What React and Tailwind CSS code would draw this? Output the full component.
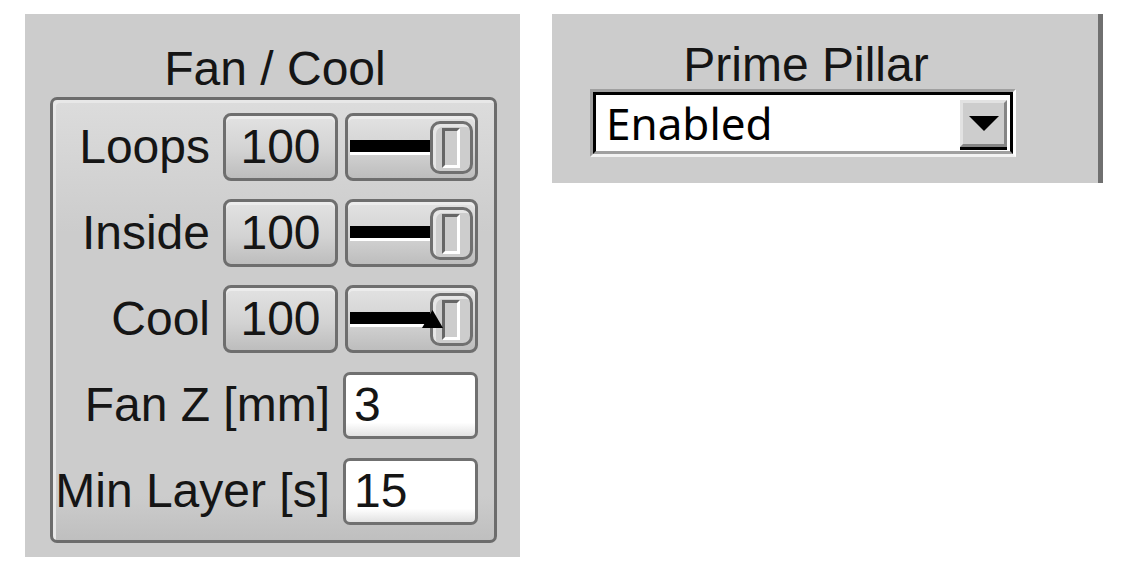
import React from "react";

function ValueButton({ children }) {
  return (
    <div className="w-[115px] h-[68px] border-[3px] border-[#6e6e6e] rounded-[8px] bg-[linear-gradient(to_bottom,#e2e2e2,#d3d3d3_55%,#bdbdbd)] shadow-[inset_0_3px_0_#ececec] flex items-center justify-center">
      {children}
    </div>
  );
}

function Slider({ marker }) {
  return (
    <div className="relative w-[133px] h-[68px] border-[3px] border-[#6e6e6e] rounded-[8px] bg-[linear-gradient(to_bottom,#e2e2e2,#d3d3d3_55%,#bdbdbd)] shadow-[inset_0_3px_0_#ececec] flex items-center pl-[2px]">
      <div className="w-[80px] h-[15px] bg-black border-b-[3px] border-white" />
      <div className="w-[43px] h-[53px] border-[3px] border-[#707070] rounded-[10px] bg-[#cdcdcd] shadow-[inset_3px_3px_0_#e6e6e6] pl-[9px] pt-[4px]">
        <div className="w-[18px] h-[40px] border-[3px] border-t-[#666666] border-l-[#666666] border-r-white border-b-white bg-[#cccccc]" />
      </div>
      {marker && (
        <svg className="absolute left-[74px] top-[22px]" width="21" height="18" viewBox="0 0 21 18">
          <polygon points="10.5,0 21,18 0,18" fill="#000" />
        </svg>
      )}
    </div>
  );
}

function TextInput({ value }) {
  return (
    <div className="w-[135px] h-[67px] border-[3px] border-[#707070] rounded-[7px] bg-[linear-gradient(to_bottom,#ffffff_78%,#e2e2e2)] flex items-center pl-[8px]">
      {value}
    </div>
  );
}

function Row({ label, children }) {
  return (
    <div className="flex items-center h-[68px] gap-[13px]">
      <span className="whitespace-nowrap">{label}</span>
      {children}
    </div>
  );
}

export default function App() {
  return (
    <div className="min-h-screen bg-white pt-[14px] pl-[25px] flex items-start gap-[32px] font-['Liberation_Sans'] text-[48px] leading-[48px] text-[#151515]">
      {/* Fan / Cool panel */}
      <div className="w-[495px] h-[543px] bg-[#cccccc] flex flex-col pt-[31px]">
        <div className="h-[48px] text-center pl-[5px]">Fan / Cool</div>
        <div className="mt-[4px] ml-[25px] w-[447px] h-[446px] border-[3px] border-[#6c6c6c] rounded-[7px] bg-[linear-gradient(to_bottom,#dcdcdc,#cccccc_30%,#cccccc_90%,#bfbfbf)] shadow-[inset_3px_3px_0_#e8e8e8] pt-[13px] pr-[16px] flex flex-col items-end gap-[18px]">
          <Row label="Loops">
            <div className="flex gap-[7px]">
              <ValueButton>100</ValueButton>
              <Slider />
            </div>
          </Row>
          <Row label="Inside">
            <div className="flex gap-[7px]">
              <ValueButton>100</ValueButton>
              <Slider />
            </div>
          </Row>
          <Row label="Cool">
            <div className="flex gap-[7px]">
              <ValueButton>100</ValueButton>
              <Slider marker />
            </div>
          </Row>
          <Row label="Fan Z [mm]">
            <TextInput value="3" />
          </Row>
          <Row label="Min Layer [s]">
            <TextInput value="15" />
          </Row>
        </div>
      </div>

      {/* Prime Pillar panel */}
      <div className="w-[551px] h-[169px] bg-[#cccccc] border-r-[5px] border-[#707070] pt-[27px] pl-[38px]">
        <div className="w-[426px] flex flex-col items-center">
          <div className="h-[48px] text-center pl-[6px]">Prime Pillar</div>
          <div className="w-[426px] h-[68px] border-[3px] border-t-[#a0a0a0] border-l-[#a0a0a0] border-r-white border-b-[#f2f2f2] flex">
            <div className="flex-1 border-[3px] border-t-black border-l-black border-r-black border-b-[#a0a0a0] bg-white flex items-start justify-between">
              <span className="self-center pl-[10px] font-['Noto_Sans'] text-[44px] leading-[44px] text-black">
                Enabled
              </span>
              <div className="mt-[5px] mr-[3px] w-[47px] h-[47px] bg-[#cdcdcd] border-[3px] border-t-[#e2e2e2] border-l-[#e2e2e2] border-r-[#858585] border-b-[#858585] shadow-[0_3px_0_#000] flex items-center justify-center">
                <svg width="30" height="15" viewBox="0 0 30 15">
                  <polygon points="0,0 30,0 15,15" fill="#000" />
                </svg>
              </div>
            </div>
          </div>
        </div>
      </div>
    </div>
  );
}
